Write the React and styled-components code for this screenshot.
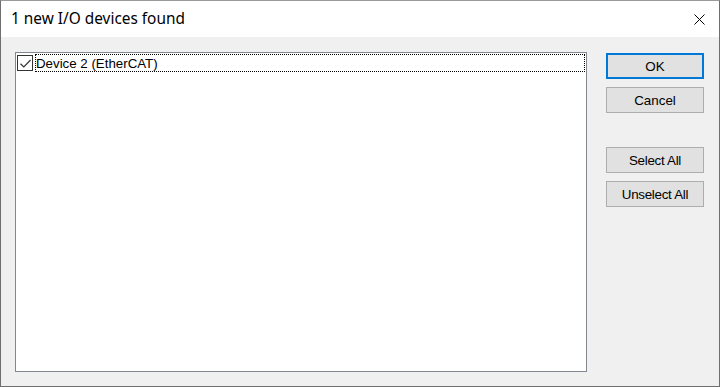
import React, { useState } from 'react';
import styled, { createGlobalStyle } from 'styled-components';

const GlobalStyle = createGlobalStyle`
  html, body {
    margin: 0;
    padding: 0;
    background: #ffffff;
  }
  * {
    box-sizing: border-box;
  }
`;

const Window = styled.div`
  width: 720px;
  height: 387px;
  display: flex;
  flex-direction: column;
  border: 1px solid #6f6f6f;
  border-top-color: #9a9a9a;
  background-color: #f0f0f0;
  font-family: "Liberation Sans", Arial, sans-serif;
  overflow: hidden;
`;

const TitleBar = styled.div`
  height: 36px;
  flex-shrink: 0;
  display: flex;
  align-items: center;
  justify-content: space-between;
  background-color: #ffffff;
  padding: 0 0 0 10px;
`;

const Title = styled.div`
  font-family: "Noto Sans", "Segoe UI", sans-serif;
  font-size: 15.4px;
  color: #000000;
  padding-bottom: 2px;
`;

const CloseButton = styled.div`
  width: 46px;
  height: 36px;
  display: flex;
  align-items: center;
  justify-content: center;
  padding-left: 6px;
`;

const Body = styled.div`
  flex: 1;
  display: flex;
  gap: 19px;
  padding: 15px 14px 14px 14px;
`;

const ListBox = styled.div`
  width: 572px;
  display: flex;
  flex-direction: column;
  background-color: #ffffff;
  border: 1px solid #828790;
  padding: 1px 1px 0 1px;
`;

const Row = styled.div`
  height: 18px;
  display: flex;
  align-items: center;
  gap: 2px;
`;

const CheckBox = styled.div`
  width: 16px;
  height: 16px;
  border: 1px solid #333333;
  background: #ffffff;
  display: flex;
  align-items: center;
  justify-content: center;
  flex-shrink: 0;
`;

const RowLabel = styled.div`
  flex: 1;
  height: 18px;
  display: flex;
  align-items: center;
  padding-left: 1px;
  font-size: 13.3px;
  color: #000000;
  outline: 1px dotted #000000;
  outline-offset: -1px;
`;

const ButtonColumn = styled.div`
  display: flex;
  flex-direction: column;
  gap: 8px;
  padding-top: 1px;
`;

const Button = styled.div`
  width: 98px;
  height: 26px;
  display: flex;
  align-items: center;
  justify-content: center;
  background-color: #e1e1e1;
  border: ${p => (p.$default ? '2px solid #0078d7' : '1px solid #adadad')};
  font-size: 13.4px;
  letter-spacing: ${p => (p.$tight ? '-0.3px' : '0')};
  color: #000000;
  margin-top: ${p => (p.$spaced ? '26px' : '0')};
`;

function CheckMark() {
  return (
    <svg width="13" height="13" viewBox="0 0 13 13">
      <path d="M1.5 6.8 L4.8 10 L11.5 3" fill="none" stroke="#333" strokeWidth="1.2" />
    </svg>
  );
}

function CloseIcon() {
  return (
    <svg width="11" height="11" viewBox="0 0 11 11">
      <path d="M0.5 0.5 L10.5 10.5 M10.5 0.5 L0.5 10.5" stroke="#000" strokeWidth="1" />
    </svg>
  );
}

export default function App() {
  const [devices] = useState([{ name: 'Device 2 (EtherCAT)', checked: true }]);

  return (
    <>
      <GlobalStyle />
      <Window>
        <TitleBar>
          <Title>1 new I/O devices found</Title>
          <CloseButton>
            <CloseIcon />
          </CloseButton>
        </TitleBar>
        <Body>
          <ListBox>
            {devices.map(d => (
              <Row key={d.name}>
                <CheckBox>{d.checked && <CheckMark />}</CheckBox>
                <RowLabel>{d.name}</RowLabel>
              </Row>
            ))}
          </ListBox>
          <ButtonColumn>
            <Button $default>OK</Button>
            <Button>Cancel</Button>
            <Button $spaced $tight>Select All</Button>
            <Button $tight>Unselect All</Button>
          </ButtonColumn>
        </Body>
      </Window>
    </>
  );
}
